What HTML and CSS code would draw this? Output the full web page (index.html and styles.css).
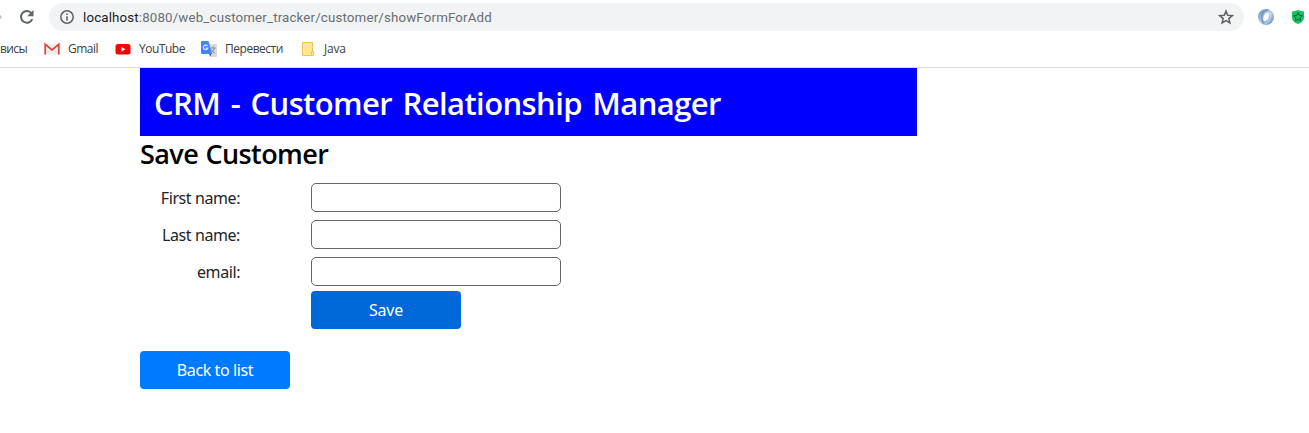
FILE: index.html
```
<!DOCTYPE html>
<html lang="en">
<head>
<meta charset="utf-8">
<title>Save Customer</title>
<link rel="stylesheet" href="styles.css">
</head>
<body>
<header class="browser">
  <div class="toolbar">
    <svg class="forward" width="4" height="10" viewBox="0 0 4 10"><path d="M-2 5L0 2.800L2.200 5L0 7.200z" fill="#c4c6c9"/></svg>
    <svg class="reload" width="16" height="16" viewBox="0 0 16 16"><path d="M13.300 10.200A5.900 5.900 0 1 1 12.500 4.100" fill="none" stroke="#5f6368" stroke-width="2"/><path d="M14.500 1v6.200H8.300z" fill="#5f6368"/></svg>
    <div class="address">
      <svg class="info" width="16" height="16" viewBox="0 0 16 16"><circle cx="8" cy="8" r="6.200" fill="none" stroke="#5f6368" stroke-width="1.500"/><path d="M8 7.200v4.300M8 4.400v1.600" stroke="#5f6368" stroke-width="1.600"/></svg>
      <span class="url"><span class="host">localhost</span>:8080/web_customer_tracker/customer/showFormForAdd</span>
      <svg class="star" width="16" height="16" viewBox="0 0 16 16"><path d="M8 2l1.700 4.200 4.600.4-3.500 3 1.100 4.400L8 11.600 4.100 14l1.100-4.400-3.500-3 4.600-.4z" fill="none" stroke="#5f6368" stroke-width="1.500"/></svg>
    </div>
    <svg class="swirl" width="18" height="18" viewBox="0 0 18 18">
      <defs><linearGradient id="ring" x1="0" y1="0" x2="1" y2="1"><stop offset="0" stop-color="#6588b8"/><stop offset=".5" stop-color="#b5cbe6"/><stop offset="1" stop-color="#5f8cc3"/></linearGradient></defs>
      <circle cx="9" cy="9" r="8" fill="url(#ring)"/><path d="M11.500 1.500C6 2 3.500 7 5 12c.4 1.600 1.200 2.700 2.200 3.500" fill="none" stroke="#6d8fbd" stroke-width="1.200"/><path d="M11 2.500C15.500 5 15 12 8.500 15.500" fill="none" stroke="#d3e1f2"/><ellipse cx="9.200" cy="8.700" rx="2.500" ry="4.400" transform="rotate(22 9 9)" fill="#fff"/>
    </svg>
    <svg class="shield" width="14" height="16" viewBox="0 0 14 16"><path d="M7 1Q10 2.300 13 2.400V9Q12.500 13 7 15Q1.500 13 1 9V2.400Q4 2.300 7 1z" fill="#16c25c"/><path d="M7 3.500l1.300 2.800 3.100.4-2.300 2.100.6 3.100L7 10.400l-2.700 1.500.6-3.100-2.300-2.100 3.100-.4z" fill="#16c25c" stroke="#185b52"/></svg>
  </div>
  <nav class="bookmarks">
    <span class="bm services">висы</span>
    <svg class="gmail" width="16" height="16" viewBox="0 0 16 16"><path d="M1 3h14v10.500H1z" fill="#eee"/><path d="M3 12l5-4 5 4" fill="none" stroke="#dcdcdc"/><path d="M1.200 13.500V3.300L8 9l6.800-5.700v10.200" fill="none" stroke="#db4437" stroke-width="1.700"/></svg>
    <span class="bm mail">Gmail</span>
    <svg class="youtube" width="16" height="16" viewBox="0 0 16 16"><rect x=".5" y="3" width="15" height="10.500" rx="2.500" fill="#f00"/><path d="M6.500 6v4.500l4-2.250z" fill="#fff"/></svg>
    <span class="bm tube">YouTube</span>
    <svg class="translate" width="16" height="16" viewBox="0 0 16 16"><path d="M6 3h9.200q.8 0 .8.800V15q0 1-.8 1H9z" fill="#dadada"/><path d="M9.500 7h5M12 5.500V7M13.600 7q-.6 3-3.600 4.800M10.300 8.500q1 2.500 3.700 3.700" fill="none" stroke="#78909c"/><path d="M8 12h3l-2 3.500z" fill="#3949ab"/><path d="M1 0h6.500L11 13H1q-1 0-1-1V1q0-1 1-1z" fill="#4285f4"/><path d="M6.500 5a2.300 2.300 0 1 0 .3 2.200H4.700" fill="none" stroke="#dce8ff" stroke-width="1.200"/></svg>
    <span class="bm trans">Перевести</span>
    <svg class="folder" width="14" height="16" viewBox="0 0 14 16"><path d="M1.500 1.500h10v13h-10z" fill="#ffe68f" stroke="#e9c84d"/><path d="M10.500 10.500h2v4h-2z" fill="#ffe68f" stroke="#e9c84d"/></svg>
    <span class="bm java">Java</span>
  </nav>
</header>
<main class="page">
  <div class="banner"><h1>CRM - Customer Relationship Manager</h1></div>
  <h2>Save Customer</h2>
  <form class="form">
    <label for="first">First name:</label><input id="first" type="text">
    <label for="last">Last name:</label><input id="last" type="text">
    <label for="email">email:</label><input id="email" type="text">
    <button class="btn save" type="button">Save</button>
  </form>
  <a class="btn back">Back to list</a>
</main>
</body>
</html>
```
FILE: styles.css
```
* { box-sizing: border-box; }
body { margin: 0; background: #fff; color: #212529; font-family: "Noto Sans", "Open Sans", sans-serif; overflow: hidden; }
svg { display: block; flex: none; }
.browser { height: 68px; border-bottom: 1px solid #dadce0; }
.toolbar { display: flex; align-items: center; height: 34px; }
.reload { margin-left: 15px; }
.address { display: flex; align-items: center; width: 1195px; height: 28px; margin-left: 14px; padding: 0 10px; border-radius: 14px; background: #f1f3f4; flex: none; }
.url { margin-left: 8px; padding-top: 1px; font-family: Roboto, sans-serif; font-size: 13.3px; letter-spacing: 0.16px; line-height: 20px; color: #6a6e72; white-space: nowrap; }
.host { color: #202124; }
.star { margin-left: auto; }
.swirl { margin-left: 13px; }
.shield { margin-left: 16px; }
.bookmarks { display: flex; align-items: center; height: 30px; }
.bm { flex: none; font-family: "Open Sans", sans-serif; font-size: 12px; letter-spacing: -0.48px; line-height: 16px; color: #3c4043; white-space: nowrap; }
.services { width: 44px; letter-spacing: -0.6px; }
.mail { width: 47px; margin-left: 8px; }
.tube { width: 62px; margin-left: 8px; }
.trans { width: 76px; margin-left: 8px; }
.java { margin-left: 9px; letter-spacing: -0.2px; }
.page { width: 777px; margin-left: 140px; }
.banner { height: 68px; padding: 14px 14px 0; background: #00f; }
h1 { margin: 0; color: #fff; font-family: "Open Sans", sans-serif; font-weight: 550; font-size: 31px; letter-spacing: -0.6px; word-spacing: 3px; line-height: 42px; white-space: nowrap; }
h2 { margin: 0; height: 47px; color: #000; font-family: "Open Sans", sans-serif; font-weight: 550; font-size: 27px; letter-spacing: -0.6px; word-spacing: 1px; line-height: 35px; }
.form { display: grid; grid-template-columns: 100px 250px; column-gap: 71px; grid-template-rows: 37px 37px 34px 38px; align-items: start; }
label { text-align: right; font-size: 16px; letter-spacing: -0.42px; line-height: 30px; color: #212529; }
input { width: 250px; height: 29px; margin: 0; padding: 0 5px; border: 1px solid #666; border-radius: 5px; background: #fff; }
.btn { display: flex; align-items: center; justify-content: center; width: 150px; height: 38px; padding: 0; border: 0; border-radius: 4px; color: #fff; font-family: "Noto Sans", sans-serif; font-size: 16px; letter-spacing: -0.4px; }
.save { grid-column: 2; letter-spacing: -0.2px; background: #0069d9; }
.back { margin-top: 22px; background: #007bff; }
```
